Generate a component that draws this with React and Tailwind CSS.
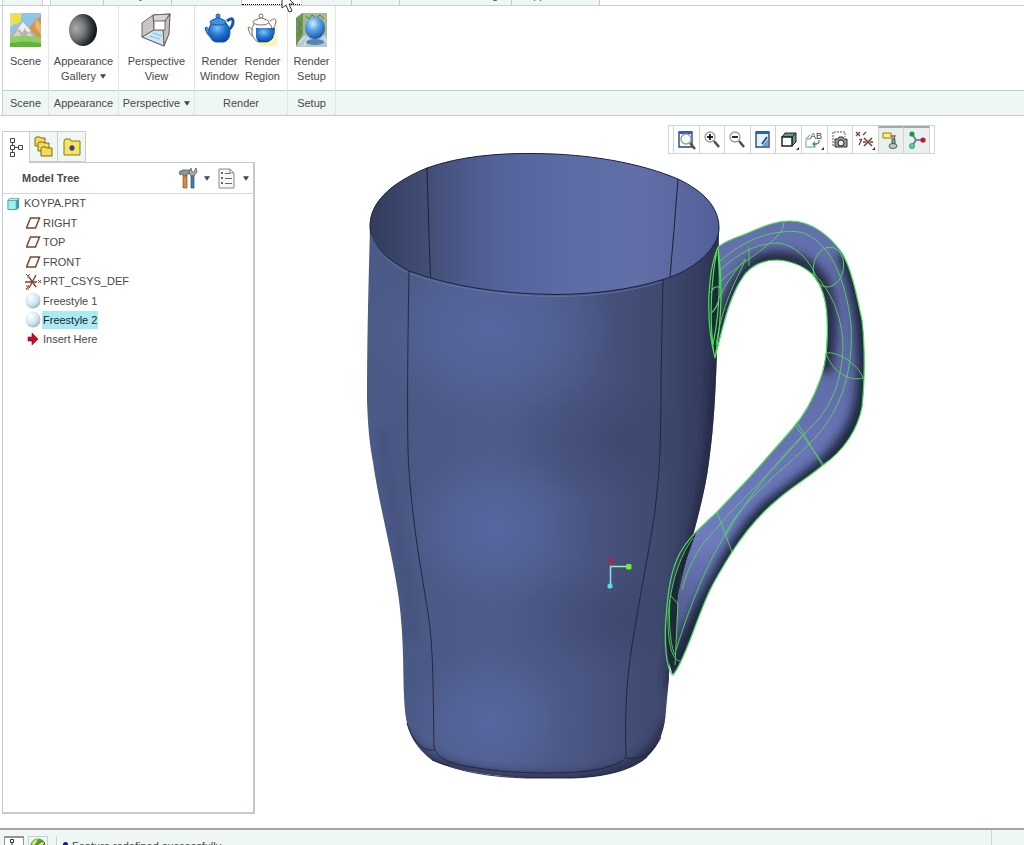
import clsx from 'clsx';

/* ---------- ribbon icons ---------- */

function SceneIcon() {
  return (
    <svg width="31" height="34" viewBox="0 0 31 34">
      <rect width="31" height="34" fill="#8fc4e8" />
      <path d="M0 0h12l-2 8-10 6z" fill="#cfe3a0" />
      <circle cx="6" cy="6" r="5" fill="#f6dd3a" />
      <path d="M31 3l-5 3-8 10 4 10h9z" fill="#cf9a50" />
      <path d="M26 6l5 6v10l-6-8z" fill="#e6b874" />
      <path d="M0 23l8-9 5-4 4 4 11 11v3H0z" fill="#b9b4b0" />
      <path d="M13 9l-6 8 3-1 2 4 3-5 2 4 4-1z" fill="#f2efec" />
      <path d="M3 24l5-7 4 7zM15 25l4-6 5 6z" fill="#d9d4cf" />
      <path d="M0 24q15-3 31 1v9H0z" fill="#8fcf62" />
      <path d="M0 30q14-3 31 0v4H0z" fill="#62b33c" />
    </svg>
  );
}

function SphereIcon() {
  return (
    <svg width="30" height="34" viewBox="0 0 30 34">
      <defs>
        <radialGradient id="sphere" cx="0.25" cy="0.45" r="0.78">
          <stop offset="0" stopColor="#a9adb0" />
          <stop offset="0.4" stopColor="#74787b" />
          <stop offset="0.75" stopColor="#2c2f32" />
          <stop offset="1" stopColor="#0a0b0c" />
        </radialGradient>
      </defs>
      <ellipse cx="15" cy="17" rx="14" ry="16" fill="url(#sphere)" />
    </svg>
  );
}

function PerspectiveIcon() {
  return (
    <svg width="32" height="36" viewBox="0 0 32 36" strokeLinejoin="round">
      <path d="M13 3L30 2 24 34 2 25z" fill="#e9e9e9" stroke="#6e6663" />
      <path d="M13 3L2 11v14l12-7z" fill="#c9c5c3" stroke="#6e6663" />
      <path d="M13 3L30 2l-5 7-11 1z" fill="#d8d5d2" stroke="#6e6663" />
      <path d="M30 2l-1 20-5 12-1-16 2-9z" fill="#c2bebc" stroke="#5c5553" />
      <path d="M2 25l12-7h9l1 16z" fill="#cbe6f5" stroke="#6e6663" />
      <path d="M14 9h11v9H14z" fill="#fff" stroke="#776f6c" />
      <path d="M10 24l10 3M13 21l9 3" stroke="#8ab7d2" fill="none" />
    </svg>
  );
}

function TeapotIcon({ outlined = false }) {
  const line = outlined ? '#8a6f5c' : '#1a56ac';
  const top = outlined ? '#ffffff' : '#3f93dd';
  return (
    <svg width="31" height="34" viewBox="0 0 31 34">
      <defs>
        <radialGradient id="pot" cx="0.4" cy="0.3" r="0.75">
          <stop offset="0" stopColor="#7cc2f5" />
          <stop offset="0.5" stopColor="#2377d2" />
          <stop offset="1" stopColor="#0c3f9c" />
        </radialGradient>
      </defs>
      {outlined && <path d="M12 14h18v19H12z" fill="#fdf5b8" />}
      <path
        d="M23 8q6-5 6 1 0 5-6 9"
        fill="none"
        stroke={line}
        strokeWidth={outlined ? 1 : 3}
      />
      <path d="M6 19Q3 12 1 15l1 3q2 6 8 7z" fill={top} stroke={line} />
      <path
        d="M8 9Q4 14 5 21q2 7 7 8h8q6-2 6-10-1-7-5-10z"
        fill={outlined ? '#fff' : 'url(#pot)'}
        stroke={line}
      />
      {outlined && <path d="M9 15h19q0 12-7 14h-9q-3-2-3-6z" fill="url(#pot)" />}
      <ellipse cx="14" cy="9" rx="8" ry="3" fill={top} stroke={line} />
      <path d="M9 7q5-4 10 0" fill={top} stroke={line} />
      <circle cx="14" cy="3" r="2" fill={top} stroke={line} />
    </svg>
  );
}

function SetupIcon() {
  return (
    <svg width="31" height="34" viewBox="0 0 31 34">
      <defs>
        <radialGradient id="ball" cx="0.4" cy="0.3" r="0.7">
          <stop offset="0" stopColor="#d3f0ff" />
          <stop offset="0.45" stopColor="#57a5e6" />
          <stop offset="1" stopColor="#1c57ad" />
        </radialGradient>
      </defs>
      <path d="M0 5L6 0h25v34H0z" fill="#a3b98f" />
      <path d="M0 5l7-5v22L0 33z" fill="#6d9355" />
      <path d="M2 8l3 4-3 3 3 4-3 4M10 3l3 3 3-4 4 3 4-3 4 4" stroke="#4e7a44" fill="none" />
      <path d="M7 22h24v12H0z" fill="#b9c8cf" />
      <path d="M2 30l7-6M8 33l4-9M27 24l4 5" stroke="#e9f1f4" />
      <ellipse cx="19" cy="29" rx="9" ry="3" fill="#4f86b5" />
      <ellipse cx="19" cy="15" rx="10" ry="11" fill="url(#ball)" />
    </svg>
  );
}

/* ---------- view toolbar icons ---------- */

function Lens({ x = 8, y = 7, sign }) {
  return (
    <g>
      <path d={`M${x + 4} ${y + 4}l5 6`} stroke="#5b4a42" strokeWidth="2.5" />
      <circle cx={x} cy={y} r="5" fill="#fff" stroke="#999" strokeWidth="1.3" />
      {sign && <path d={`M${x - 3} ${y}h6`} stroke="#111" strokeWidth="1.8" />}
      {sign === 'plus' && <path d={`M${x} ${y - 3}v6`} stroke="#111" strokeWidth="1.8" />}
    </g>
  );
}

const viewTools = [
  {
    name: 'Refit',
    art: (
      <>
        <path d="M3 2h13v15H3z" fill="#fff" stroke="#24477c" strokeWidth="1.4" />
        <path d="M3 1h13v3H3z" fill="#2f5fae" />
        <Lens x={10} y={9} />
      </>
    )
  },
  { name: 'Zoom In', art: <Lens sign="plus" /> },
  { name: 'Zoom Out', art: <Lens sign="minus" /> },
  {
    name: 'Repaint',
    art: (
      <>
        <path d="M3 2h13v15H3z" fill="#e6f1fb" stroke="#24477c" strokeWidth="1.4" />
        <path d="M3 1h13v3H3z" fill="#2f5fae" />
        <path d="M15 9l-6 7h6z" fill="#6ba3d8" />
        <path d="M14 7l-5 7" stroke="#24477c" strokeWidth="1.8" />
      </>
    )
  },
  {
    name: 'Display Style',
    menu: true,
    art: (
      <>
        <path d="M3 7l3-4h11l-4 4zM13 7l4-4v9l-4 4z" fill="#5c9c87" stroke="#222" />
        <path d="M3 7h10v9H3z" fill="#fff" stroke="#222" strokeWidth="1.5" />
      </>
    )
  },
  {
    name: 'Saved Orientations',
    menu: true,
    art: (
      <>
        <path d="M6 5L2 9v8h9v-3M2 9h4" fill="none" stroke="#9db5ae" strokeWidth="1.3" />
        <text x="6" y="9" fontSize="9" fill="#333" fontFamily="Liberation Sans">
          AB
        </text>
        <path d="M15 10q1 4-4 4" fill="none" stroke="#3c9a62" strokeWidth="1.3" />
        <path d="M11 11v6l-3-3z" fill="#3c9a62" />
      </>
    )
  },
  {
    name: 'View Manager',
    art: (
      <>
        <path d="M3 16V2h12v5" fill="none" stroke="#555" strokeDasharray="2 1" />
        <path d="M5 9h3l1-2h4l1 2h3v8H5z" fill="#9a9a9a" stroke="#333" />
        <circle cx="11" cy="13" r="3" fill="#eee" stroke="#222" />
      </>
    )
  },
  {
    name: 'Datum Display Filters',
    menu: true,
    art: (
      <>
        <path d="M1 2l4 4m0-4L1 6M8 5l3-3M4 15l3-6M7 9l-3 1" stroke="#7c4034" strokeWidth="1.3" />
        <path d="M9 8l8 8m0-8l-8 8M8 12h3M15 12h3" stroke="#7c4034" strokeWidth="1.6" />
      </>
    )
  },
  {
    name: 'Annotation Display',
    pressed: true,
    art: (
      <>
        <path d="M2 2h8v5H2z" fill="#fff36b" stroke="#8c7a22" />
        <path d="M10 5h4l-2 5" fill="none" stroke="#a24b3a" strokeWidth="1.3" />
        <path d="M11 7l3 1v5l-3-1z" fill="#789e8d" stroke="#41685a" />
        <ellipse cx="12" cy="15" rx="4" ry="2.5" fill="#b9c9c2" stroke="#4b5f58" />
      </>
    )
  },
  {
    name: 'Spin Center',
    pressed: true,
    art: (
      <>
        <path d="M5 3l4 6h7M9 9l-4 6" fill="none" stroke="#5a6fa8" strokeWidth="1.6" />
        <circle cx="5" cy="3" r="2.6" fill="#1f9a3c" />
        <circle cx="5" cy="15" r="2.6" fill="#4fd39a" stroke="#1c7f49" strokeWidth="0.6" />
        <circle cx="16" cy="9" r="2.6" fill="#b61c33" />
      </>
    )
  }
];

/* ---------- model tree icons ---------- */

function PartIcon() {
  return (
    <svg width="13" height="14" viewBox="0 0 14 14">
      <path d="M1 3l2-2h10v10l-2 2H1z" fill="#3f9a9a" />
      <path d="M1 3h9v10H1z" fill="#9cf1ee" stroke="#4aa0a0" />
      <path d="M1 3l2-2h10l-2 2z" fill="#d4fbf9" stroke="#4aa0a0" strokeWidth="0.7" />
    </svg>
  );
}

function PlaneIcon() {
  return (
    <svg width="15" height="14" viewBox="0 0 15 14">
      <path d="M4.500 2h9l-4 10h-9z" fill="#fff" stroke="#7a4631" strokeWidth="1.5" />
    </svg>
  );
}

function CsysIcon() {
  return (
    <svg width="17" height="17" viewBox="0 0 17 17" stroke="#84432f" fill="none">
      <path d="M0 9h12M4 4l7 10M11 2L4 15" strokeWidth="1.4" />
      <path d="M13 7l3 3m0-3l-3 3M1 1l2 2 2-2M3 3v2M1 13h3l-3 3h3" />
    </svg>
  );
}

function FreestyleIcon() {
  return (
    <svg width="16" height="17" viewBox="0 0 16 17">
      <defs>
        <radialGradient id="free" cx="0.35" cy="0.3" r="0.75">
          <stop offset="0" stopColor="#ffffff" />
          <stop offset="0.6" stopColor="#d2e7f2" />
          <stop offset="1" stopColor="#98b8ca" />
        </radialGradient>
      </defs>
      <ellipse cx="8" cy="8.5" rx="7.5" ry="8" fill="url(#free)" />
    </svg>
  );
}

function InsertIcon() {
  return (
    <svg width="12" height="12" viewBox="0 0 12 12">
      <path d="M1 4h4V0l6 6-6 6V8H1z" fill="#c80f22" stroke="#7d0815" strokeWidth="0.6" />
    </svg>
  );
}

function TreeTabIcon() {
  return (
    <svg width="15" height="21" viewBox="0 0 15 21" fill="none" stroke="#444">
      <path d="M1.500 1.500h4v4h-4zM1.500 8.500h4v4h-4zM1.500 15.500h4v4h-4zM9.500 8.500h4v4h-4zM6 10.500h3M3.500 6v2M3.500 13v2" />
    </svg>
  );
}

function FoldersIcon() {
  return (
    <svg width="19" height="21" viewBox="0 0 19 21" fill="#f5dc55" stroke="#7e6a1c">
      <path d="M1 2l1-1h4l1 1h4v8H1z" />
      <path d="M4 7l1-1h4l1 1h5v8H4z" />
      <path d="M7 12l1-1h4l1 1h5v8H7z" />
    </svg>
  );
}

function FavoritesIcon() {
  return (
    <svg width="18" height="18" viewBox="0 0 18 18">
      <path d="M1 3l1-2h5l1 2h9v14H1z" fill="#f7e462" stroke="#8a7620" />
      <path d="M9 7v6M6 10h6M7 8l4 4M11 8l-4 4" stroke="#2b3a96" strokeWidth="1.2" />
    </svg>
  );
}

function ToolsIcon() {
  return (
    <svg width="19" height="22" viewBox="0 0 19 22">
      <path d="M0 5q3-3 8-2h3v4H8v2H4V7L1 8z" fill="#8d9498" stroke="#555" strokeWidth="0.7" />
      <path d="M4 9h4v12H4z" fill="#d98a3d" stroke="#8d5320" strokeWidth="0.7" />
      <path d="M12 1l1 4h2l2-4 1 4-3 4h-3l-2-4z" fill="#a4b0b5" stroke="#555" strokeWidth="0.7" />
      <path d="M12 9h3v12h-3z" fill="#3e82b5" stroke="#255275" strokeWidth="0.7" />
    </svg>
  );
}

function ListIcon() {
  return (
    <svg width="17" height="21" viewBox="0 0 17 21" fill="none" stroke="#666">
      <path d="M1 1h11l4 4v15H1z" fill="#f7f7f5" stroke="#888" />
      <path d="M12 1v4h4" stroke="#888" />
      <path d="M3 5h2M3 10h2M3 15h2" strokeWidth="2" />
      <path d="M7 5.500h5M7 10.500h7M7 15.500h7" />
    </svg>
  );
}

function Caret() {
  return (
    <svg width="6" height="5" viewBox="0 0 7 5" className="inline-block shrink-0">
      <path d="M0 0h7L3.500 5z" fill="#444" />
    </svg>
  );
}

/* ---------- window parts ---------- */

const ribbonTabs = [
  { width: 'w-[53px]' },
  { width: 'w-[68px]', label: 'Analysis' },
  { width: 'w-[70px]' },
  { width: 'w-[60px]', active: true },
  { width: 'w-[50px]' },
  { width: 'w-12' },
  { width: 'w-28', label: 'Flexible Modeling' },
  { width: 'w-[88px]', label: 'Applications' }
];

const ribbonGroups = [
  { title: 'Scene', width: 'w-[47px]', items: [{ icon: <SceneIcon />, lines: ['Scene'] }] },
  {
    title: 'Appearance',
    width: 'w-[70px]',
    items: [{ icon: <SphereIcon />, lines: ['Appearance', 'Gallery'], menu: true }]
  },
  {
    title: 'Perspective',
    width: 'w-[76px]',
    menu: true,
    items: [{ icon: <PerspectiveIcon />, lines: ['Perspective', 'View'] }]
  },
  {
    title: 'Render',
    width: 'w-[93px]',
    items: [
      { icon: <TeapotIcon />, lines: ['Render', 'Window'] },
      { icon: <TeapotIcon outlined />, lines: ['Render', 'Region'] }
    ]
  },
  { title: 'Setup', width: 'w-12', items: [{ icon: <SetupIcon />, lines: ['Render', 'Setup'] }] }
];

function TabStrip() {
  return (
    <nav className="flex h-1.5 items-end overflow-hidden border-b border-[#c9cfcd] pl-0.5">
      <div className="h-full w-[41px] border-x border-[#c9cfcd] bg-[#eef7f4]" />
      <div className="h-full w-2 border-r border-[#c9cfcd]" />
      {ribbonTabs.map((tab, i) => (
        <div
          key={i}
          className={clsx(
            'flex h-full shrink-0 items-end justify-center border-r border-[#c3cac7]',
            tab.width,
            tab.active ? 'border-b border-dotted border-b-black bg-white' : 'bg-[#eef7f4]'
          )}
        >
          {tab.label && (
            <button className="mb-1 whitespace-nowrap leading-none">{tab.label}</button>
          )}
        </div>
      ))}
    </nav>
  );
}

function Ribbon() {
  return (
    <div className="flex border-b border-[#c3cac7] pl-0.5">
      {ribbonGroups.map((group) => (
        <section
          key={group.title}
          className={clsx(
            'flex shrink-0 flex-col border-r border-[#dfe5e3] first:border-l first:border-l-[#c9cfcd]',
            group.width
          )}
        >
          <div className="flex h-[84px] justify-center pt-1.5">
            {group.items.map((item) => (
              <button
                key={item.lines.join(' ')}
                className="flex min-w-[43px] flex-col items-center gap-1.5 leading-[15px]"
              >
                <span className="flex h-9 items-center">{item.icon}</span>
                <span>
                  {item.lines.map((line, i) => (
                    <span key={line} className="block whitespace-nowrap">
                      {line}
                      {item.menu && i === item.lines.length - 1 && (
                        <span className="ml-1 inline-block pb-0.5 align-middle leading-none">
                          <Caret />
                        </span>
                      )}
                    </span>
                  ))}
                </span>
              </button>
            ))}
          </div>
          <h2 className="flex h-[25px] items-center justify-center gap-1 border-t border-[#c3cac7] bg-[#eef7f4]">
            {group.title}
            {group.menu && <Caret />}
          </h2>
        </section>
      ))}
      <div className="flex flex-1 flex-col justify-end">
        <div className="h-[25px] border-t border-[#c3cac7] bg-[#eef7f4]" />
      </div>
    </div>
  );
}

const features = [
  { name: 'RIGHT', icon: <PlaneIcon /> },
  { name: 'TOP', icon: <PlaneIcon /> },
  { name: 'FRONT', icon: <PlaneIcon /> },
  { name: 'PRT_CSYS_DEF', icon: <CsysIcon /> },
  { name: 'Freestyle 1', icon: <FreestyleIcon /> },
  { name: 'Freestyle 2', icon: <FreestyleIcon />, selected: true },
  { name: 'Insert Here', icon: <InsertIcon /> }
];

function ModelTree() {
  return (
    <aside className="mb-3.5 ml-0.5 flex w-[253px] shrink-0 flex-col pt-[15px]">
      <div className="flex h-[31px]">
        <button
          aria-label="Model Tree"
          className="z-10 -mb-px flex w-7 items-center justify-center border border-b-0 border-[#c9cfcd] bg-white"
        >
          <TreeTabIcon />
        </button>
        <button
          aria-label="Folder Browser"
          className="flex w-7 items-center justify-center border-y border-r border-[#c9cfcd] bg-[#eef7f4]"
        >
          <FoldersIcon />
        </button>
        <button
          aria-label="Favorites"
          className="flex w-7 items-center justify-center border-y border-r border-[#c9cfcd] bg-[#eef7f4]"
        >
          <FavoritesIcon />
        </button>
      </div>
      <div className="flex flex-1 flex-col border border-r-2 border-b-2 border-[#c3cac7]">
        <div className="flex h-[31px] items-center border-b border-[#d3d8d6] pr-1 pl-[19px]">
          <h2 className="flex-1 font-bold">Model Tree</h2>
          <button aria-label="Settings" className="flex items-center gap-1.5">
            <ToolsIcon />
            <Caret />
          </button>
          <button aria-label="Show" className="ml-2 flex items-center gap-2">
            <ListIcon />
            <Caret />
          </button>
        </div>
        <ul className="grid h-[155px] auto-rows-fr">
          <li className="flex items-center gap-1 pl-1">
            <PartIcon />
            KOYPA.PRT
          </li>
          {features.map((f) => (
            <li key={f.name} className="flex items-center pl-[21px]">
              <span className="flex w-[18px] shrink-0 justify-center">{f.icon}</span>
              <span className={clsx('px-px leading-[18px]', f.selected && 'bg-[#a9ebf3] text-[#223]')}>
                {f.name}
              </span>
            </li>
          ))}
        </ul>
      </div>
    </aside>
  );
}

function ViewToolbar() {
  return (
    <div className="mt-[9px] mr-[89px] flex h-[29px] w-[267px] shrink-0 self-end border border-[#d0d4d3] px-1">
      {viewTools.map((tool) => (
        <button
          key={tool.name}
          aria-label={tool.name}
          className={clsx(
            'relative flex flex-1 items-center justify-center border-l border-[#d0d4d3] last:border-r',
            tool.pressed && 'border-t-2 border-t-[#a4a8ab] bg-[#e9eeee]'
          )}
        >
          <svg width="20" height="20" viewBox="0 0 20 20" fill="none">
            {tool.art}
            {tool.menu && <path d="M20 17v3h-3z" fill="#333" />}
          </svg>
        </button>
      ))}
    </div>
  );
}

const bodyPath =
  'M370 226C369 270 367 330 367 400C368 430 370 445 373 462C379 505 393 555 399 600C404 640 403 670 404 695C405 725 409 742 432 760C450 769 490 776 527 778H573C600 777 630 772 647 757C660 745 665 728 666 710L669 677C670 640 674 610 685 567C694 530 705 495 709 462C717 410 718 330 719 228C719 200 640 160 535 160C420 170 372 195 370 226Z';

const rimPath =
  'M370 226C370 204 388 184 427 168C460 156 500 153 535 153.500C590 154 640 163 678 179C705 192 719 208 719 228C719 248 695 270 663 279.500C630 290 590 294.500 555 294.500C500 294 450 286 409 271C385 258 370 245 370 226Z';

const handlePath =
  'M718 247C726 241 734 238 743 235C758 229 772 221 790 221C812 221 830 236 842 253C852 270 857 297 862 320C865 345 865 380 862 407C858 428 845 450 823 465C808 478 790 488 777 500C760 514 745 532 732 552C722 568 715 580 710 590C702 607 697 622 690 640C684 655 679 668 673 675L676 620C676 600 681 583 685 567C688 553 692 542 695 533C702 525 709 519 717 512L750 477L793 428C806 413 814 397 820 380C826 365 828 340 827 317C826 297 820 283 813 275C803 265 790 261 777 260C763 260 750 266 743 277C732 292 726 312 722 330C719 343 717 350 715 358C717 320 721 280 718 247Z';

function Mug() {
  return (
    <svg
      className="ml-[105px] h-[630px] w-[510px] shrink-0 overflow-visible"
      viewBox="360 154 510 630"
      fill="none"
    >
      <defs>
        <linearGradient id="body" gradientUnits="userSpaceOnUse" x1="367" y1="0" x2="719" y2="0">
          <stop offset="0" stopColor="#4c5a88" />
          <stop offset="0.13" stopColor="#4a5884" />
          <stop offset="0.35" stopColor="#4e5c8b" />
          <stop offset="0.6" stopColor="#4a5683" />
          <stop offset="0.83" stopColor="#3f4a6f" />
          <stop offset="0.95" stopColor="#343c5e" />
          <stop offset="1" stopColor="#2a304c" />
        </linearGradient>
        <linearGradient id="inside" gradientUnits="userSpaceOnUse" x1="370" y1="0" x2="719" y2="0">
          <stop offset="0" stopColor="#323c5b" />
          <stop offset="0.17" stopColor="#434e77" />
          <stop offset="0.36" stopColor="#54629a" />
          <stop offset="0.6" stopColor="#5c6da6" />
          <stop offset="0.78" stopColor="#626ea8" />
          <stop offset="1" stopColor="#525f98" />
        </linearGradient>
        <linearGradient id="handle" gradientUnits="userSpaceOnUse" x1="0" y1="221" x2="0" y2="675">
          <stop offset="0" stopColor="#6571ae" />
          <stop offset="0.3" stopColor="#5f6aa5" />
          <stop offset="0.5" stopColor="#6874b6" />
          <stop offset="0.7" stopColor="#6f7bbe" />
          <stop offset="1" stopColor="#3f4a70" />
        </linearGradient>
        <radialGradient id="glow">
          <stop offset="0" stopColor="#5666a0" />
          <stop offset="0.5" stopColor="#55659b" stopOpacity="0.7" />
          <stop offset="1" stopColor="#526295" stopOpacity="0" />
        </radialGradient>
        <radialGradient id="shade">
          <stop offset="0" stopColor="#38436a" stopOpacity="0.5" />
          <stop offset="1" stopColor="#38436a" stopOpacity="0" />
        </radialGradient>
        <filter id="soft" x="-30%" y="-30%" width="160%" height="160%">
          <feGaussianBlur stdDeviation="5" />
        </filter>
        <clipPath id="bodyClip">
          <path d={bodyPath} />
        </clipPath>
        <clipPath id="handleClip">
          <path d={handlePath} />
        </clipPath>
      </defs>

      {/* body */}
      <path d={bodyPath} fill="url(#body)" />
      <g clipPath="url(#bodyClip)">
        <ellipse cx="490" cy="330" rx="125" ry="95" fill="url(#glow)" />
        <ellipse cx="495" cy="528" rx="95" ry="80" fill="url(#glow)" />
        <ellipse cx="490" cy="722" rx="90" ry="75" fill="url(#glow)" />
        <ellipse cx="615" cy="440" rx="105" ry="60" fill="url(#shade)" />
        <ellipse cx="615" cy="620" rx="100" ry="55" fill="url(#shade)" />
        <path
          d="M383 430C388 500 405 560 413 640"
          stroke="#3d4870"
          strokeWidth="8"
          opacity="0.4"
          filter="url(#soft)"
        />
        <path
          d="M404 735C415 765 470 779 550 780C620 779 655 762 668 720"
          stroke="#252c48"
          strokeWidth="10"
          filter="url(#soft)"
        />
        <path d="M719 300C718 420 705 500 685 567L669 690" stroke="#222842" strokeWidth="9" filter="url(#soft)" />
      </g>

      {/* opening */}
      <path d={rimPath} fill="url(#inside)" stroke="#1d2233" />
      <path d="M371 235C376 250 388 262 409 273C450 288 500 296 555 296.500C590 296.500 630 292 663 281.500" stroke="#6b78ae" opacity="0.7" />
      <path d="M427 168L429 235L430.500 277M678 179L674 230L670 277" stroke="#1d2233" />

      {/* surface seams */}
      <g stroke="#1d2233" strokeWidth="0.9">
        <path d="M409 271C408 330 407 400 408 450C410 510 421 570 428 613C434 650 433 700 434 747C436 757 447 762 460 765C490 771 520 773 547 773C580 773 600 770 611 766C620 763 625 760 626 756C625 720 626 700 628 677C631 640 648 560 655 510C661 465 661 420 661 378L663 279" />
        <path d="M407 723C412 742 424 752 434 750M626 758C643 761 655 750 661 737" />
        <path d="M432 760C460 772 490 777 527 778H573C600 777 630 772 647 757" />
      </g>

      {/* handle */}
      <path d={handlePath} fill="url(#handle)" />
      <g clipPath="url(#handleClip)">
        <g filter="url(#soft)">
          <path d="M714 365C722 315 736 275 758 262C785 252 812 262 824 287C832 310 830 340 824 372" stroke="#252b45" strokeWidth="15" />
          <path d="M845 252C858 280 866 320 866 365C866 400 864 430 823 468L777 503C740 530 720 580 705 605L673 675" stroke="#1f253c" strokeWidth="18" />
        </g>
      </g>
      <path d="M697 530C684 548 674 575 671 596C665 625 665 655 673 675C677 650 676 625 678 590C682 570 690 550 697 530Z" fill="#1c2a36" />
      <path d="M718 247C709 270 707 325 715 358C720 330 722 290 718 247Z" fill="#1b2a38" />

      {/* selected curves */}
      <g stroke="#4fdd58" strokeWidth="1.2">
        <path d="M718 247C726 241 734 238 743 235C758 229 772 221 790 221C812 221 830 236 842 253C852 270 857 297 862 320C865 345 865 380 862 407C858 428 845 450 823 465C808 478 790 488 777 500C760 514 745 532 732 552C722 568 715 580 710 590C702 607 697 622 690 640C684 655 679 668 673 675C666 670 664 640 666 618C668 590 671 570 680 553C690 535 703 526 717 512L750 477L793 428C806 413 814 397 820 380C826 365 828 340 827 317C826 297 820 283 813 275C803 265 790 261 777 260C763 260 750 266 743 277C732 292 724 320 715 358" />
        <path d="M718 247C709 268 704 315 715 358C722 320 723 285 718 247M717 250C711 280 709 320 714 354M718 252C721 285 718 320 713 345M711 293Q714 284 720 288M711 313Q715 311 719 300" />
      </g>
      <g stroke="#58d560" strokeWidth="0.9">
        <path d="M719 262C745 238 775 229 800 232C830 240 846 280 851 325C853 365 845 405 815 438" />
        <path d="M720 270C740 252 758 243 778 243C795 245 808 258 816 276C830 290 842 315 843 345C842 385 829 412 806 432C780 458 745 500 726 535" />
        <path d="M721 281C738 265 755 256 766 246C777 237 783 232 784 222M749 247V266M746 259C735 282 722 305 716 345M718 300C726 282 736 270 745 259" />
        <ellipse cx="828.500" cy="267" rx="15" ry="20" transform="rotate(10 828 267)" />
        <path d="M826 353C838 351 858 364 863 378C850 382 832 372 826 353M795 425L824 465M798 424L822 465M717 512L732 552" />
        <path d="M815 438C790 465 740 500 725 535C710 560 695 590 676 650" />
        <path d="M806 432C770 475 735 505 715 530C700 545 688 565 682 590" />
        <path d="M693 538C680 555 670 585 668 618C668 645 672 660 680 661M671 596L678 604L675 665M670 600C668 630 672 650 675 655" />
      </g>

      {/* spin center */}
      <path d="M610.500 560v7" stroke="#a02b50" strokeWidth="1.500" />
      <path d="M610.500 585V566.500" stroke="#8fe3ea" strokeWidth="1.500" />
      <path d="M610 566.500h18" stroke="#a6ec9a" strokeWidth="1.500" />
      <circle cx="611.500" cy="559.500" r="2.500" fill="#a3284b" />
      <circle cx="610" cy="586" r="2.600" fill="#4fe0ee" />
      <rect x="626" y="564" width="5.500" height="5.500" rx="1.500" fill="#6fee3c" />
    </svg>
  );
}

function StatusBar() {
  return (
    <footer className="flex h-[17px] shrink-0 items-start overflow-hidden border-t-2 border-[#a2a6a5] bg-[#eef7f4] pl-1">
      <button
        aria-label="Show Tree"
        className="mt-1.5 flex h-5 w-5 items-start justify-center border border-t-2 border-[#8f9496] bg-white"
      >
        <svg width="14" height="18" viewBox="0 0 14 18" fill="none" stroke="#333">
          <path d="M3.500 1.500h3v3h-3zM3.500 7.500h3v3h-3zM5 5v2M7 9h5" />
        </svg>
      </button>
      <button
        aria-label="Show Browser"
        className="mt-1.5 ml-1 flex h-5 w-5 items-start justify-center border border-[#c9cfcd] bg-[#eef7f4]"
      >
        <svg width="18" height="18" viewBox="0 0 18 18">
          <circle cx="9" cy="9" r="7.500" fill="#4ea23e" />
          <path d="M3 6q3-4 6-4l-2 4-3 4z" fill="#d9e85c" />
          <path d="M7 9l6-5 3 2-4 4-2 5z" fill="#e9d65a" stroke="#34702b" />
        </svg>
      </button>
      <div className="mt-1.5 ml-2 h-5 border-l border-[#d0d4d3]" />
      <p className="mt-2 ml-1.5 flex items-start gap-1 leading-[16px]">
        <span className="mt-1 h-[5px] w-[5px] rounded-full bg-[#1414a0]" />
        Feature redefined successfully.
      </p>
      <div className="mr-8 ml-auto h-5 border-l border-[#d0d4d3]" />
    </footer>
  );
}

export default function App() {
  return (
    <div className="relative flex h-screen flex-col overflow-hidden bg-white font-['Liberation_Sans',Arial,sans-serif] text-[11px] text-[#484848]">
      <TabStrip />
      <Ribbon />
      <main className="flex min-h-0 flex-1">
        <ModelTree />
        <div className="flex min-w-0 flex-1 flex-col overflow-hidden">
          <ViewToolbar />
          <Mug />
        </div>
      </main>
      <StatusBar />
      {/* pointer */}
      <svg
        className="pointer-events-none absolute top-0 left-[281px]"
        width="14"
        height="14"
        viewBox="0 0 14 14"
      >
        <path d="M1 -8v16l4-3 3 7 3-1-3-7h5z" fill="#fff" stroke="#333" />
      </svg>
    </div>
  );
}
